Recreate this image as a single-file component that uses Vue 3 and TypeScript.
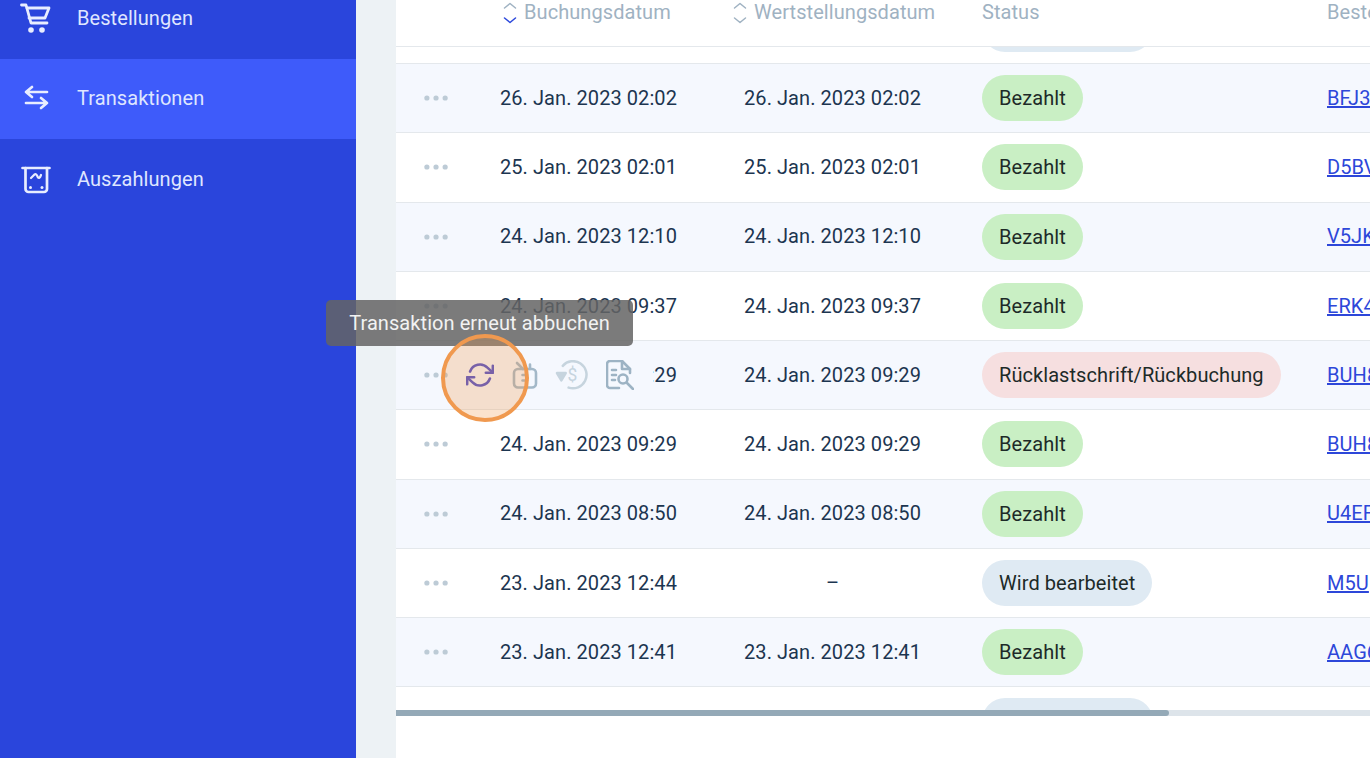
<script setup lang="ts">
interface Row {
  booked: string
  value: string
  status: 'paid' | 'pending' | 'chargeback'
  order: string
  hover?: boolean
}

const statusLabel: Record<Row['status'], string> = {
  paid: 'Bezahlt',
  pending: 'Wird bearbeitet',
  chargeback: 'Rücklastschrift/Rückbuchung',
}

const rows: Row[] = [
  { booked: '', value: '', status: 'pending', order: '' },
  { booked: '26. Jan. 2023 02:02', value: '26. Jan. 2023 02:02', status: 'paid', order: 'BFJ3' },
  { booked: '25. Jan. 2023 02:01', value: '25. Jan. 2023 02:01', status: 'paid', order: 'D5BV' },
  { booked: '24. Jan. 2023 12:10', value: '24. Jan. 2023 12:10', status: 'paid', order: 'V5JK' },
  { booked: '24. Jan. 2023 09:37', value: '24. Jan. 2023 09:37', status: 'paid', order: 'ERK4' },
  { booked: '24. Jan. 2023 09:29', value: '24. Jan. 2023 09:29', status: 'chargeback', order: 'BUH8', hover: true },
  { booked: '24. Jan. 2023 09:29', value: '24. Jan. 2023 09:29', status: 'paid', order: 'BUH8' },
  { booked: '24. Jan. 2023 08:50', value: '24. Jan. 2023 08:50', status: 'paid', order: 'U4EF' },
  { booked: '23. Jan. 2023 12:44', value: '–', status: 'pending', order: 'M5U' },
  { booked: '23. Jan. 2023 12:41', value: '23. Jan. 2023 12:41', status: 'paid', order: 'AAG6' },
  { booked: '', value: '', status: 'pending', order: '' },
]
</script>

<template>
  <div class="page">
    <aside class="sidebar">
      <nav class="nav">
        <a class="nav-item">
          <svg class="nav-icon" viewBox="0 0 32 32" fill="none" stroke="currentColor" stroke-width="2.800" stroke-linecap="round" stroke-linejoin="round">
            <path d="M1.500 3H6L11 21H27" />
            <path d="M7 6H29L25 16H9" />
            <circle cx="11" cy="28" r="2.800" fill="currentColor" stroke="none" />
            <circle cx="22" cy="28" r="2.800" fill="currentColor" stroke="none" />
          </svg>
          <span>Bestellungen</span>
        </a>
        <a class="nav-item active">
          <svg class="nav-icon" viewBox="0 0 32 32" fill="none" stroke="currentColor" stroke-width="2.700" stroke-linecap="round" stroke-linejoin="round">
            <path d="M6 10H27M12 5L6 10L12 15" />
            <path d="M6 21H27M21 16L27 21L21 26" />
          </svg>
          <span>Transaktionen</span>
        </a>
        <a class="nav-item">
          <svg class="nav-icon" viewBox="0 0 32 32" fill="none" stroke="currentColor" stroke-width="2.700" stroke-linecap="round" stroke-linejoin="round">
            <path d="M2.500 5H29.500" />
            <path d="M5.500 5V26a3 3 0 0 0 3 3H24a3 3 0 0 0 3-3V5" />
            <path d="M11 15L14.500 11.500Q16 10.500 17 12.500L18 14.500Q19.500 16 21 12" stroke-width="2.200" />
            <circle cx="10.500" cy="24.500" r="1.500" fill="currentColor" stroke="none" />
            <circle cx="22" cy="24.500" r="1.500" fill="currentColor" stroke="none" />
          </svg>
          <span>Auszahlungen</span>
        </a>
      </nav>
    </aside>

    <div class="gutter"></div>

    <main class="main">
      <header class="table-head">
        <div class="th"></div>
        <div class="th sortable">
          <svg class="sort" viewBox="0 0 16 22" fill="none" stroke-width="1.500" stroke-linecap="round" stroke-linejoin="round">
            <path d="M2.500 6L8 1.500L13.500 6" stroke="#9fb2c2" />
            <path d="M2.500 16L8 20.500L13.500 16" stroke="#2b47dc" />
          </svg>
          <span>Buchungsdatum</span>
        </div>
        <div class="th sortable value-head">
          <svg class="sort" viewBox="0 0 16 22" fill="none" stroke="#9fb2c2" stroke-width="1.500" stroke-linecap="round" stroke-linejoin="round">
            <path d="M2.500 6L8 1.500L13.500 6" />
            <path d="M2.500 16L8 20.500L13.500 16" />
          </svg>
          <span>Wertstellungsdatum</span>
        </div>
        <div class="th status-col">Status</div>
        <div class="th">Bestellnummer</div>
      </header>

      <div class="table-body">
        <div class="rows">
          <div v-for="(row, i) in rows" :key="i" class="row" :class="{ tinted: i % 2 === 1 }">
            <div class="td">
              <svg class="dots" viewBox="0 0 26 6" fill="#bdcbd6">
                <circle cx="3" cy="3" r="2.700" />
                <circle cx="12.500" cy="3" r="2.700" />
                <circle cx="22" cy="3" r="2.700" />
              </svg>
            </div>
            <div class="td date">{{ row.booked }}</div>
            <div class="td date centered">{{ row.value }}</div>
            <div class="td status-col">
              <span class="pill" :class="[row.status, { ghost: !row.booked }]">{{ row.booked ? statusLabel[row.status] : '' }}</span>
            </div>
            <div class="td date"><a class="order">{{ row.order }}</a></div>

            <div v-if="row.hover" class="actions">
              <svg class="act act-sync" viewBox="0 0 24 24" fill="none" stroke="#4a4bcb" stroke-width="2.200" stroke-linecap="round" stroke-linejoin="round">
                <polyline points="23 4 23 10 17 10" />
                <polyline points="1 20 1 14 7 14" />
                <path d="M3.510 9a9 9 0 0 1 14.850-3.360L23 10M1 14l4.640 4.360A9 9 0 0 0 20.490 15" />
              </svg>
              <svg class="act act-clip" viewBox="0 0 26 28" fill="none" stroke="#a3b8c8" stroke-width="2.600" stroke-linecap="round" stroke-linejoin="round">
                <rect x="2" y="8" width="22" height="18.500" rx="4" />
                <path d="M5 2L11 8M18 3.500V8" />
                <path d="M10.500 14H15M10.500 19.500H15" />
              </svg>
              <svg class="act act-refund" viewBox="0 0 34 32" fill="none" stroke="#c6d4de" stroke-width="2.600" stroke-linecap="round" stroke-linejoin="round">
                <path d="M8 6A14 14 0 1 1 14 28.500" />
                <path d="M2 13.500H11L6.500 21Z" fill="#c6d4de" />
                <text x="18" y="21.500" text-anchor="middle" class="dollar" fill="#c6d4de" stroke="none">$</text>
              </svg>
              <svg class="act act-doc" viewBox="0 0 28 30" fill="none" stroke="#9db3c4" stroke-width="2.600" stroke-linecap="round" stroke-linejoin="round">
                <path d="M13 28H4a3 3 0 0 1-3-3V4a3 3 0 0 1 3-3H16L24 9V13" />
                <path d="M16 1V9H24" />
                <path d="M6 10H10M6 15H10M6 20H9" />
                <circle cx="17" cy="19" r="4.500" />
                <path d="M21 23L27 29" />
              </svg>
            </div>
          </div>
        </div>
      </div>

      <div class="scrollbar"><div class="thumb"></div></div>
    </main>

    <div class="tooltip">Transaktion erneut abbuchen</div>
    <div class="spotlight"></div>
  </div>
</template>

<style>
html,
body {
  margin: 0;
  overflow: hidden;
}
</style>

<style scoped>
.page {
  position: relative;
  display: flex;
  width: 1370px;
  height: 758px;
  overflow: hidden;
  background: #fff;
  font-family: Roboto, 'Liberation Sans', sans-serif;
  font-size: 20px;
  letter-spacing: 0.07px;
  color: #1c3550;
}
.sidebar {
  flex: 0 0 356px;
  background: #2a45dc;
}
.nav {
  margin-top: -22px;
}
.nav-item {
  display: flex;
  align-items: center;
  gap: 25px;
  height: 80.500px;
  padding-left: 20px;
  color: #dfe6ff;
  box-sizing: border-box;
}
.nav-item.active {
  background: #3e5bfa;
  padding-bottom: 1px;
}
.nav-icon {
  width: 32px;
  height: 32px;
  color: #e8edff;
}
.gutter {
  flex: 0 0 40px;
  background: #edf2f5;
}
.main {
  flex: 1;
  min-width: 0;
}
.table-head,
.row {
  display: grid;
  grid-template-columns: 104px 232px 204px 391px 43px;
}
.table-head {
  height: 46px;
  border-bottom: 1px solid #e4e8ec;
  box-sizing: content-box;
  color: #9fb2c2;
  line-height: 24px;
  white-space: nowrap;
}
.th {
  min-width: 0;
}
.sortable {
  display: flex;
  gap: 6px;
  padding-left: 2px;
}
.value-head {
  padding-left: 0;
}
.sort {
  width: 16px;
  height: 22px;
  margin-top: 2px;
  flex: none;
}
.status-col {
  padding-left: 46px;
}
.table-body {
  height: 663px;
  overflow: hidden;
}
.rows {
  margin-top: -52.250px;
}
.row {
  position: relative;
  height: 69.250px;
  box-sizing: border-box;
  border-bottom: 1px solid #e4e8ec;
  background: #fff;
  align-items: center;
}
.row.tinted {
  background: #f5f8fe;
}
.td {
  white-space: nowrap;
  min-width: 0;
}
.date {
  padding-bottom: 0.600px;
}
.centered {
  text-align: center;
  padding-right: 3px;
}
.dots {
  display: block;
  width: 25px;
  height: 6px;
  margin-left: 28px;
}
.pill {
  display: inline-block;
  height: 46px;
  line-height: 46px;
  padding: 0 17px;
  border-radius: 23px;
  color: #1d2a28;
  vertical-align: top;
}
.pill.ghost {
  width: 171px;
  box-sizing: border-box;
}
.pill.paid {
  background: #c9efc4;
}
.pill.pending {
  background: #dfeaf3;
}
.pill.chargeback {
  background: #f6dfe0;
}
.order {
  color: #2d47d9;
  text-decoration: underline;
}
.actions {
  position: absolute;
  left: 56px;
  top: 14px;
  width: 201px;
  height: 40px;
  display: flex;
  align-items: center;
  background: #f5f8fe;
}
.act {
  display: block;
  flex: none;
}
.act-sync {
  width: 28px;
  height: 28px;
  margin-left: 14px;
}
.act-clip {
  width: 26px;
  height: 28px;
  margin-left: 18px;
}
.act-refund {
  width: 33px;
  height: 31px;
  margin-left: 17px;
}
.act-doc {
  width: 28px;
  height: 30px;
  margin-left: 18px;
}
.dollar {
  font-family: Roboto, sans-serif;
  font-size: 18px;
}
.scrollbar {
  height: 6px;
  background: #dde4ea;
}
.thumb {
  width: 773px;
  height: 6px;
  border-radius: 0 3px 3px 0;
  background: #94a9b7;
}
.tooltip {
  position: absolute;
  left: 326px;
  top: 300px;
  width: 307px;
  height: 46px;
  box-sizing: border-box;
  border-radius: 5px;
  background: rgba(100, 100, 100, 0.85);
  color: #f2f2f2;
  line-height: 46px;
  text-align: center;
  white-space: nowrap;
}
.spotlight {
  position: absolute;
  left: 441px;
  top: 334px;
  width: 88px;
  height: 88px;
  box-sizing: border-box;
  border: 4px solid #f0994f;
  border-radius: 50%;
  background: rgba(240, 153, 79, 0.28);
}
</style>
